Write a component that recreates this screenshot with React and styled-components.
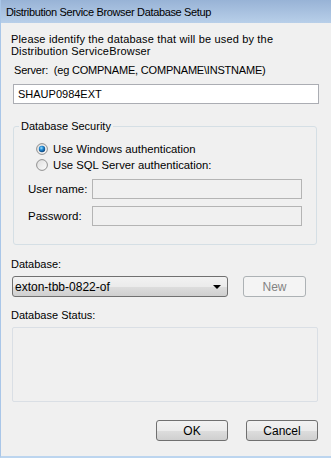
import React from 'react'
import styled, { createGlobalStyle } from 'styled-components'

const GlobalStyle = createGlobalStyle`
  html, body {
    margin: 0;
    padding: 0;
    background: #f0f0f0;
  }
  body {
    font-family: 'Liberation Sans', Arial, sans-serif;
    font-size: 11px;
    color: #000;
  }
`

const Window = styled.div`
  width: 331px;
  height: 458px;
  box-sizing: border-box;
  border-left: 1px solid #a9c6e8;
  border-bottom: 2px solid #bcd5ef;
  background: #f0f0f0;
  display: flex;
  flex-direction: column;
  overflow: hidden;
`

const TitleBar = styled.div`
  height: 23px;
  flex: none;
  display: flex;
  align-items: center;
  padding-left: 5px;
  background: linear-gradient(#98b3d6, #b8cfe9);
  font-size: 11px;
  letter-spacing: -0.35px;
  color: #000;
`

const Body = styled.div`
  flex: 1;
  display: flex;
  flex-direction: column;
  padding: 10px 12px 0 10px;
`

const Intro = styled.p`
  margin: 0;
  line-height: 12px;
  letter-spacing: 0.17px;
`

const Label = styled.div`
  line-height: 12px;
  margin-top: ${(p) => p.$top || 0}px;
  padding-left: ${(p) => p.$indent || 0}px;
  letter-spacing: ${(p) => p.$spacing || 0}px;
`

const TextBox = styled.input`
  box-sizing: border-box;
  height: 20px;
  margin: ${(p) => p.$top || 0}px 0 0 ${(p) => p.$left || 0}px;
  width: ${(p) => p.$width || 'auto'};
  padding: 0 4px;
  border: 1px solid #abadb3;
  background: ${(p) => (p.disabled ? '#f0f0f0' : '#fff')};
  ${(p) => p.disabled && 'border-color: #b4b4b4;'}
  font: inherit;
  color: #000;
  outline: none;
`

const Group = styled.fieldset`
  margin: 16px 2px 0 2px;
  padding: 0 14px 18px 14px;
  border: 1px solid #d5dfe5;
  border-radius: 3px;
  display: flex;
  flex-direction: column;
`

const Legend = styled.legend`
  margin-left: -9px;
  padding: 0 2px;
  line-height: 12px;
`

const RadioList = styled.div`
  display: flex;
  flex-direction: column;
  margin-top: 9px;
  padding-left: 8px;
`

const RadioRow = styled.label`
  display: flex;
  align-items: center;
  height: 16px;
  gap: 5px;
  font-size: 11.3px;
`

const FieldRow = styled.div`
  display: flex;
  align-items: center;
  margin-top: ${(p) => p.$top}px;
`

const FieldLabel = styled.span`
  width: 64px;
  font-size: 11.5px;
`

const ComboRow = styled.div`
  display: flex;
  align-items: center;
  gap: 15px;
  margin-top: 6px;
  padding-left: 1px;
`

const Combo = styled.div`
  box-sizing: border-box;
  width: 216px;
  height: 21px;
  border: 1px solid #707070;
  border-radius: 3px;
  background: linear-gradient(#f2f2f2 0%, #ebebeb 50%, #dddddd 51%, #cfcfcf 100%);
  display: flex;
  align-items: center;
  justify-content: space-between;
  padding: 0 6px 0 2px;
  font-size: 12px;
`

const Caret = styled.span`
  width: 0;
  height: 0;
  border-left: 4px solid transparent;
  border-right: 4px solid transparent;
  border-top: 4px solid #000;
`

const Button = styled.button`
  box-sizing: border-box;
  width: ${(p) => p.$width || 72}px;
  height: 21px;
  border-radius: 3px;
  font: inherit;
  font-size: 12px;
  padding: 0;
  border: 1px solid ${(p) => (p.disabled ? '#adb2b5' : '#707070')};
  color: ${(p) => (p.disabled ? '#838383' : '#000')};
  background: ${(p) =>
    p.disabled
      ? '#f4f4f4'
      : 'linear-gradient(#f2f2f2 0%, #ebebeb 50%, #dddddd 51%, #cfcfcf 100%)'};
`

const StatusBox = styled.div`
  margin: 6px 1px 0 1px;
  height: 73px;
  border: 1px solid #dadfe5;
  border-radius: 2px;
`

const Footer = styled.div`
  display: flex;
  justify-content: flex-end;
  gap: 18px;
  margin-top: 18px;
  padding-right: 1px;
`

const Radio = ({ checked }) => (
  <svg width='12' height='12' viewBox='0 0 12 12'>
    <defs>
      <linearGradient id='rb' x1='0' y1='0' x2='1' y2='1'>
        <stop offset='0' stopColor='#dcdcdc' />
        <stop offset='1' stopColor='#fdfdfd' />
      </linearGradient>
      <radialGradient id='rd' cx='0.4' cy='0.35' r='0.7'>
        <stop offset='0' stopColor='#9fe0ff' />
        <stop offset='0.45' stopColor='#1d86d0' />
        <stop offset='1' stopColor='#0b3a70' />
      </radialGradient>
    </defs>
    <circle cx='6' cy='6' r='5.4' fill='url(#rb)' stroke='#8f8f8f' strokeWidth='1' />
    {checked && <circle cx='6' cy='6' r='3.2' fill='url(#rd)' />}
  </svg>
)

const App = () => (
  <>
    <GlobalStyle />
    <Window>
      <TitleBar>Distribution Service Browser Database Setup</TitleBar>
      <Body>
        <Intro>
          Please identify the database that will be used by the
          <br />
          Distribution ServiceBrowser
        </Intro>
        <Label $top={7} $indent={3} $spacing={-0.2}>
          Server:&nbsp; (eg COMPNAME, COMPNAME\INSTNAME)
        </Label>
        <TextBox $top={8} $left={2} defaultValue='SHAUP0984EXT' />

        <Group>
          <Legend>Database Security</Legend>
          <RadioList>
            <RadioRow>
              <Radio checked />
              Use Windows authentication
            </RadioRow>
            <RadioRow>
              <Radio />
              Use SQL Server authentication:
            </RadioRow>
          </RadioList>
          <FieldRow $top={6}>
            <FieldLabel>User name:</FieldLabel>
            <TextBox $width='210px' disabled />
          </FieldRow>
          <FieldRow $top={7}>
            <FieldLabel>Password:</FieldLabel>
            <TextBox $width='210px' disabled />
          </FieldRow>
        </Group>

        <Label $top={13}>Database:</Label>
        <ComboRow>
          <Combo>
            exton-tbb-0822-of
            <Caret />
          </Combo>
          <Button $width={63} disabled>
            New
          </Button>
        </ComboRow>

        <Label $top={12}>Database Status:</Label>
        <StatusBox />

        <Footer>
          <Button>OK</Button>
          <Button>Cancel</Button>
        </Footer>
      </Body>
    </Window>
  </>
)

export default App
